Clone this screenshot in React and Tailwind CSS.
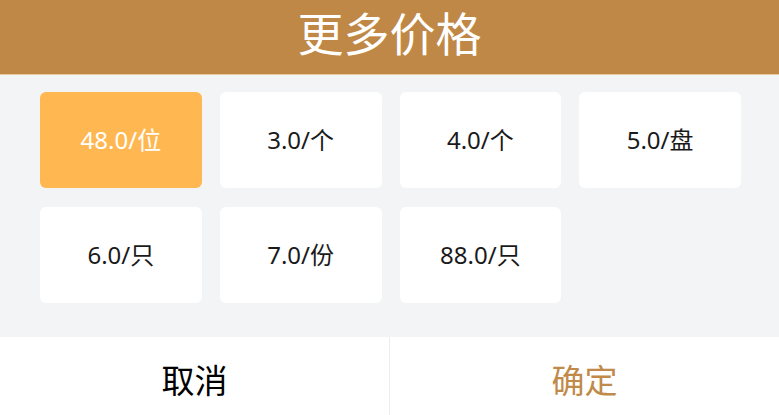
import React, { useState } from 'react';

const prices = [
  { id: 1, price: '48.0', unit: '位' },
  { id: 2, price: '3.0', unit: '个' },
  { id: 3, price: '4.0', unit: '个' },
  { id: 4, price: '5.0', unit: '盘' },
  { id: 5, price: '6.0', unit: '只' },
  { id: 6, price: '7.0', unit: '份' },
  { id: 7, price: '88.0', unit: '只' },
];

const App = () => {
  const [selected, setSelected] = useState(1);

  return (
    <div
      className="w-[779px] h-[415px] flex flex-col bg-white overflow-hidden"
      style={{ fontFamily: '"Noto Sans", "Noto Sans CJK SC", sans-serif' }}
    >
      <div className="h-[75px] bg-[#bf8846] flex items-center justify-center pb-[9px] border-b border-[#e9c9a0]">
        <h2 className="text-white text-[46px] leading-none m-0 font-normal">更多价格</h2>
      </div>

      <div className="bg-[#f3f4f6] pt-[17px] pb-[34px] pl-[40px] pr-[38px] grid grid-cols-4 gap-x-[18px] gap-y-[19px]">
        {prices.map(p => (
          <button
            key={p.id}
            onClick={() => setSelected(p.id)}
            className={`h-[96px] rounded-[6px] flex items-center justify-center text-[24px] ${
              selected === p.id ? 'bg-[#ffb851] text-white' : 'bg-white text-[#1a1a1a]'
            }`}
          >
            {p.price}/{p.unit}
          </button>
        ))}
      </div>

      <div className="flex-1 flex bg-white">
        <button className="flex-1 flex items-center justify-center pt-[10px] text-[33px] text-black border-r border-[#ececec]">
          取消
        </button>
        <button className="flex-1 flex items-center justify-center pt-[10px] text-[33px] text-[#c08a4a]">
          确定
        </button>
      </div>
    </div>
  );
};

export default App;
